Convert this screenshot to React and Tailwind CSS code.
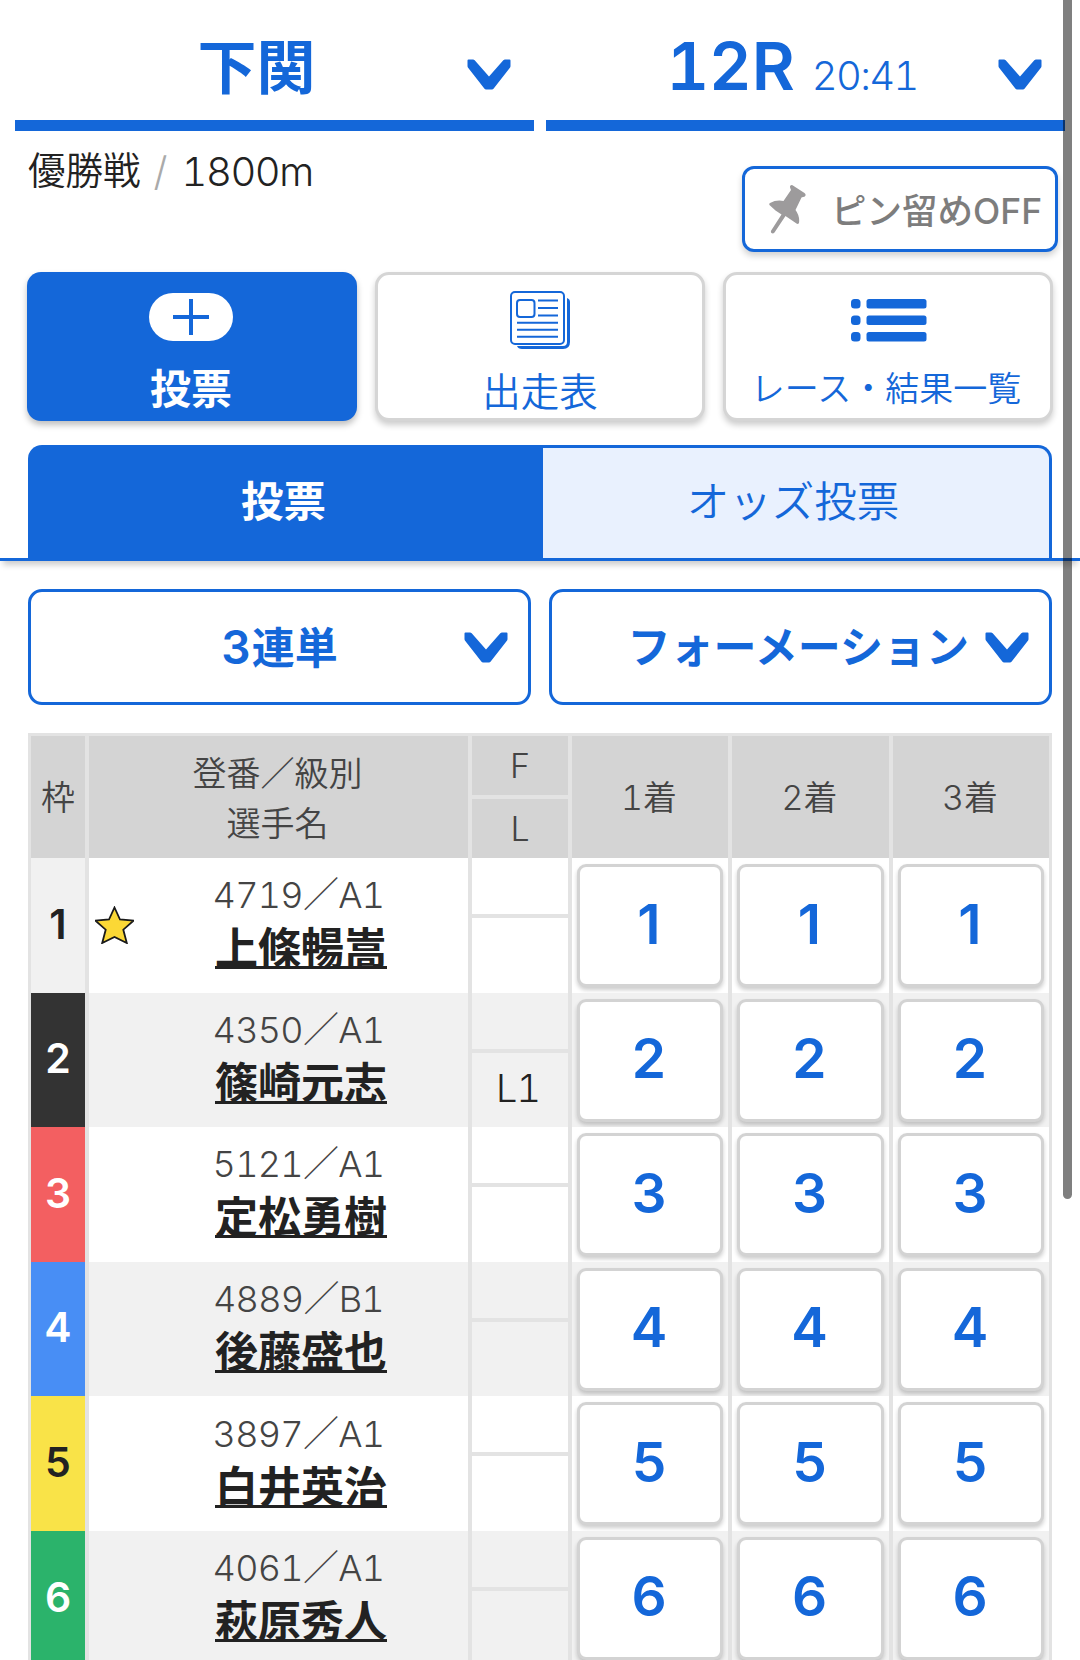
import React from "react";

const racers = [
  { no: 1, id: "4719／A1", name: "上條暢嵩", l: "", star: true, color: "bg-[#f1f1f1] text-[#222]" },
  { no: 2, id: "4350／A1", name: "篠崎元志", l: "L1", color: "bg-[#333] text-white" },
  { no: 3, id: "5121／A1", name: "定松勇樹", l: "", color: "bg-[#f35f61] text-white" },
  { no: 4, id: "4889／B1", name: "後藤盛也", l: "", color: "bg-[#488ef5] text-white" },
  { no: 5, id: "3897／A1", name: "白井英治", l: "", color: "bg-[#f9e348] text-[#222]" },
  { no: 6, id: "4061／A1", name: "萩原秀人", l: "", color: "bg-[#2bb36b] text-white" },
];

function Chevron() {
  return (
    <svg width="44" height="31" viewBox="0 0 44 31" fill="#1467d9" className="shrink-0">
      <path d="M1.500.5h4.500q1 0 1.700.8L22 17.500 36.300 1.300q.7-.8 1.700-.8h4.500q1 0 1 1v5.500q0 1-.6 1.800L26.500 29.700q-.6.8-1.500.8h-6q-.9 0-1.500-.8L1.100 8.800Q.5 8 .5 7V1.500q0-1 1-1Z" />
    </svg>
  );
}

function PinIcon() {
  return (
    <svg width="37" height="49" viewBox="0 0 37 49" fill="#9d9b9c">
      <path d="M21.500.5q1-.8 2-.2L35.500 8q1.500 1.300 1 2.500-.8 1.500-2.500 1.500l-1.500.5-6 12.500q4.500 6 3.500 13-1 1.500-2.500.6L16.500 31 5.500 47.500q-1.500 1.500-3 .5-1-1-.3-2.500L12.500 29.500 6.500 25.500 1 20.500q-1.500-1.500 0-2.500 6.500-3.500 13.500-2L22 5l-.8-2q-.5-1.700.3-2.500Z" />
    </svg>
  );
}

function NewsIcon() {
  return (
    <svg width="61" height="59" viewBox="0 0 61 59" fill="none" stroke="#1467d9" strokeWidth="2">
      <path d="M57 7q3 1 3 4v40q0 7-7 7H12q-4 0-5-3h46q4 0 4-4Z" fill="#1467d9" stroke="none" />
      <rect x="1" y="1" width="53" height="52" rx="4" />
      <rect x="7" y="9" width="17.500" height="17" rx="3" />
      <path d="M28 9.500h20M28 17h20M28 24.500h20M7 31.800h41M7 38.800h41M7 45.800h41" />
    </svg>
  );
}

function ListIcon() {
  return (
    <svg width="76" height="43" viewBox="0 0 76 43" fill="#1467d9">
      {[0, 16.5, 33].map((y) => (
        <g key={y}>
          <rect x="0" y={y} width="9.500" height="9.500" rx="3.500" />
          <rect x="15.500" y={y} width="60" height="9.500" rx="2.500" />
        </g>
      ))}
    </svg>
  );
}

function StarIcon() {
  return (
    <svg width="39" height="38" viewBox="0 0 39 38" className="shrink-0">
      <path
        d="M19.500 1.500l5.500 12 13.500 1.200-10.200 9 3.500 13.300-12.300-6-12.300 6 3.500-13.300-10.200-9 13.500-1.200Z"
        fill="#fbd835"
        stroke="#1a1a1a"
        strokeWidth="1.800"
      />
    </svg>
  );
}

function Header() {
  return (
    <header className="flex gap-3 pl-[15px] pr-[15px] text-[#1467d9]">
      <div className="flex h-[131px] w-[519px] items-center border-b-[11px] border-[#1467d9] pr-[23px]">
        <h1 className="flex-1 pl-[31px] pt-[15px] text-center text-[59px] leading-none font-semibold">下関</h1>
        <div className="pt-7">
          <Chevron />
        </div>
      </div>
      <div className="flex h-[131px] w-[519px] items-center border-b-[11px] border-[#1467d9] pr-[23px]">
        <p className="flex-1 pl-[40px] pt-3 text-center leading-none whitespace-nowrap tabular-nums">
          <span className="text-[66px] font-semibold">12R</span>
          <span className="ml-[17px] text-[40px] font-light tracking-[-1.700px]">20:41</span>
        </p>
        <div className="pt-7">
          <Chevron />
        </div>
      </div>
    </header>
  );
}

function RaceInfo() {
  return (
    <div className="flex h-[141px] justify-between pl-[28px] pr-[22px]">
      <p className="flex h-[81px] items-center text-[37.500px] font-[350] text-[#222]">
        優勝戦<span className="mr-[14px] ml-[13px] text-[40px] text-[#aaa]">/</span>
        <span className="text-[40px] font-light tracking-[-1.400px] tabular-nums">1800m</span>
      </p>
      <button className="mt-[35px] flex h-[86px] w-[316px] items-center rounded-xl border-[3px] border-[#1467d9] bg-white pl-6 text-[35.500px] font-medium text-[#7d7d7d] shadow-[0_4px_6px_rgba(0,0,0,0.18)]">
        <PinIcon />
        <span className="ml-[25px] pt-[6px] whitespace-nowrap">ピン留めOFF</span>
      </button>
    </div>
  );
}

function Menu() {
  return (
    <nav className="flex gap-[18px] pl-[27px]">
      <button className="flex h-[149px] w-[330px] flex-col items-center rounded-[14px] bg-[#1467d9] pt-[21px] pr-[2px] text-[41px] leading-none font-bold text-white shadow-[0_4px_6px_rgba(0,0,0,0.25)]">
        <span className="flex h-12 w-21 items-center justify-center rounded-full bg-white">
          <svg width="36" height="36" viewBox="0 0 36 36" stroke="#1467d9" strokeWidth="4">
            <path d="M18 0v36M0 18h36" />
          </svg>
        </span>
        <span className="mt-[28px]">投票</span>
      </button>
      <button className="flex h-[149px] w-[330px] flex-col items-center rounded-[14px] border-[3px] border-[#d5d5d5] bg-white pt-4 text-[38.500px] leading-none font-[350] text-[#1467d9] shadow-[0_4px_6px_rgba(0,0,0,0.2)]">
        <NewsIcon />
        <span className="mt-[23px]">出走表</span>
      </button>
      <button className="flex h-[149px] w-[330px] flex-col items-center rounded-[14px] border-[3px] border-[#d5d5d5] bg-white pt-6 pr-1 text-[34px] leading-none font-[350] whitespace-nowrap text-[#1467d9] shadow-[0_4px_6px_rgba(0,0,0,0.2)]">
        <div className="pl-[6px]">
          <ListIcon />
        </div>
        <span className="mt-[30px]">レース・結果一覧</span>
      </button>
    </nav>
  );
}

function Tabs() {
  return (
    <div className="mt-6 flex h-[116px] border-b-[3px] border-[#1467d9] px-[28px] text-[42.500px] text-[#1467d9] shadow-[0_7px_6px_-3px_rgba(0,0,0,0.2)]">
      <button className="w-[515px] rounded-tl-[14px] bg-[#1467d9] font-bold text-white">
        <span className="pr-1">投票</span>
      </button>
      <button className="flex-1 rounded-tr-[14px] border-t-[3px] border-r-[3px] border-[#1467d9] bg-[#e9f1fe] pr-[6px] pb-[2px] font-[350]">
        オッズ投票
      </button>
    </div>
  );
}

function Selects() {
  return (
    <div className="mt-7 flex gap-[18px] px-[28px] text-[43px] font-semibold text-[#1467d9]">
      <button className="flex h-[116px] w-[503px] items-center rounded-[14px] border-[3px] border-[#1467d9] pr-5">
        <span className="flex-1 pl-[64px]">
          <span className="mr-px text-[46px]">3</span>連単
        </span>
        <Chevron />
      </button>
      <button className="flex h-[116px] w-[503px] items-center justify-end rounded-[14px] border-[3px] border-[#1467d9] pr-5">
        <span className="mr-[16px] whitespace-nowrap">フォーメーション</span>
        <Chevron />
      </button>
    </div>
  );
}

const columns = "grid grid-cols-[54px_379px_96px_156px_157px_156px] gap-x-1 border-x-[3px] border-[#e3e3e3] bg-[#e3e3e3]";

function TableHead() {
  return (
    <div className={`${columns} h-[125px] border-t-[3px] text-[34px] font-[350] text-[#444] [&>*]:bg-[#d4d4d4]`}>
      <div className="flex items-center justify-center">枠</div>
      <div className="flex flex-col items-center justify-center pt-1 pr-[2px] leading-[50px]">
        <span>登番／級別</span>
        <span>選手名</span>
      </div>
      <div className="grid grid-rows-[63px_59px] text-center leading-[59px]">
        <span className="border-b-4 border-[#e3e3e3]">F</span>
        <span>L</span>
      </div>
      {["1着", "2着", "3着"].map((label) => (
        <div key={label} className="flex items-center justify-center pr-[2px] tabular-nums">{label}</div>
      ))}
    </div>
  );
}

function RacerRow({ racer }) {
  const bg = racer.no % 2 ? "bg-white" : "bg-[#f1f1f1]";
  return (
    <div className={`${columns} h-[134.6px]`}>
      <div className={`flex items-center justify-center pb-[2px] text-[41px] font-semibold ${racer.color}`}>{racer.no}</div>
      <div className={`flex items-center pl-[6px] ${bg}`}>
        <div className="w-[39px]">{racer.star && <StarIcon />}</div>
        <div className="flex flex-1 flex-col items-center pb-[2px]">
          <span className="pr-[5px] text-[36px] leading-[48px] font-light tracking-[-0.7px] text-[#444] tabular-nums">{racer.id}</span>
          <a className="text-[43px] leading-[58px] font-semibold text-[#222] underline decoration-[3px] underline-offset-[2px]">{racer.name}</a>
        </div>
      </div>
      <div className={`text-center text-[38px] leading-[70px] font-light text-[#222] ${bg}`}>
        <div className="h-[60px] border-b-4 border-[#e3e3e3]" />
        <div className="pr-1 tracking-[-1px] tabular-nums">{racer.l}</div>
      </div>
      {[1, 2, 3].map((place) => (
        <div key={place} className={`px-[5px] pt-[6px] ${bg}`}>
          <button className="h-[123px] w-full rounded-[9px] border-[3px] border-[#d3d3d3] bg-white pr-[2px] pb-[3px] text-[55px] leading-none font-semibold text-[#1467d9] shadow-[0_3px_4px_rgba(0,0,0,0.2)]">
            {racer.no}
          </button>
        </div>
      ))}
    </div>
  );
}

export default function App() {
  return (
    <div className="relative h-[1660px] w-[1080px] overflow-hidden bg-white font-['Inter','Noto_Sans_CJK_JP',sans-serif]">
      <Header />
      <RaceInfo />
      <Menu />
      <Tabs />
      <Selects />
      <section className="mx-[28px] mt-[28px]">
        <TableHead />
        {racers.map((racer) => (
          <RacerRow key={racer.no} racer={racer} />
        ))}
      </section>
      <div className="absolute -top-4 right-[8px] h-[1215px] w-[9px] rounded-full bg-black/50" />
    </div>
  );
}
